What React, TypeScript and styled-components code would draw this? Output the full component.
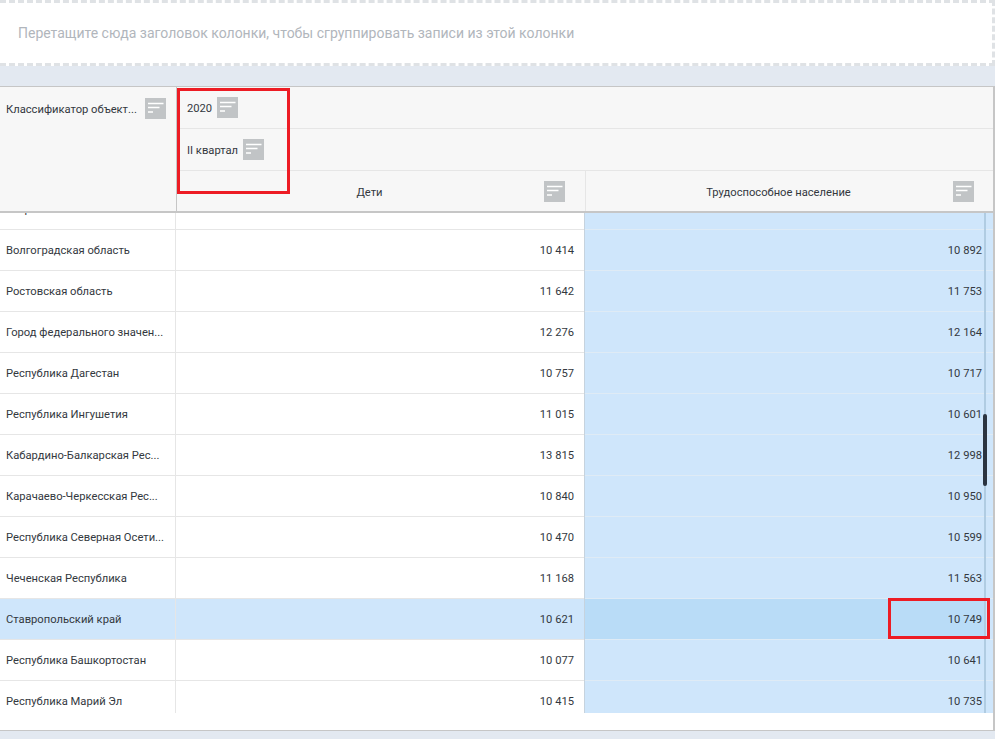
import React from "react";
import styled, { createGlobalStyle } from "styled-components";

const Global = createGlobalStyle`
  html, body { margin: 0; padding: 0; background: #e3e9f1; }
  body { font-family: Roboto, "Liberation Sans", sans-serif; overflow: hidden; }
  * { box-sizing: border-box; }
`;

const Page = styled.div`
  position: relative;
  width: 995px;
  height: 739px;
  display: flex;
  flex-direction: column;
  background: #e3e9f1;
`;

const DropZone = styled.div`
  height: 66px;
  flex: none;
  display: flex;
  align-items: center;
  padding-left: 18px;
  background: #fff;
  border: 3px dashed #dfe2e5;
  border-left: none;
  font-size: 14px;
  color: #b1b6bc;
`;

const Table = styled.div`
  margin-top: 20px;
  height: 645px;
  flex: none;
  background: #fff;
  border: 1px solid #c6c6c6;
  border-left: none;
  border-right-width: 2px;
  font-size: 11.2px;
  color: #33383e;
`;

const Head = styled.div`
  display: flex;
  height: 126px;
  background: #f7f7f7;
  border-bottom: 2px solid #c6c6c6;
`;

const HeadLabel = styled.span`
  padding-top: 2px;
`;

const FrozenHead = styled.div`
  width: 177px;
  flex: none;
  height: 42px;
  padding-left: 6px;
  display: flex;
  align-items: center;
  gap: 8px;
`;

const HeadColumns = styled.div`
  flex: 1;
  display: flex;
  flex-direction: column;
  border-left: 1px solid #c6c6c6;
  margin-left: -1px;
`;

const LevelRow = styled.div`
  height: 42px;
  padding-left: 10px;
  display: flex;
  align-items: center;
  gap: 5px;
  border-bottom: 1px solid #e6e6e6;
`;

const LeafRow = styled.div`
  flex: 1;
  display: grid;
  grid-template-columns: 408px 1fr;
`;

const LeafCell = styled.div`
  display: flex;
  align-items: center;
  padding: 0 20px 0 18px;
  & + & {
    padding-right: 19px;
    border-left: 1px solid #e6e6e6;
  }
`;

const LeafLabel = styled(HeadLabel)`
  flex: 1;
  text-align: center;
`;

const Body = styled.div`
  position: relative;
  height: 500px;
  overflow: hidden;
`;

const Rows = styled.div`
  margin-top: -24px;
`;

const Row = styled.div<{ $selected?: boolean }>`
  display: grid;
  grid-template-columns: 176px 409px 1fr;
  height: 41px;
  background: ${(p) => (p.$selected ? "#cfe6fb" : "#fff")};
  border-bottom: 1px solid #e6e6e6;
`;

const NameCell = styled.div`
  padding-left: 6px;
  padding-right: 10px;
  padding-top: 1px;
  line-height: 40px;
  border-right: 1px solid #e6e6e6;
  white-space: nowrap;
`;

const ValueCell = styled.div`
  padding-right: 10px;
  padding-top: 1px;
  line-height: 40px;
  text-align: right;
  border-right: 1px solid #c6d3de;
`;

const FocusCell = styled.div<{ $selected?: boolean }>`
  height: 41px;
  padding-right: 11px;
  padding-top: 1px;
  line-height: 40px;
  text-align: right;
  background: ${(p) =>
    p.$selected
      ? "linear-gradient(90deg, #b9dcf7 0, #b9dcf7 399px, #cfe6fb 399px)"
      : "#cfe6fb"};
  border-bottom: 1px solid #dfebf5;
`;

const Track = styled.div`
  position: absolute;
  left: 984px;
  top: 0;
  bottom: 0;
  width: 2px;
  background: #b0cce2;
`;

const Thumb = styled.div`
  position: absolute;
  left: 983px;
  top: 201px;
  width: 4px;
  height: 72px;
  border-radius: 2px;
  background: #2b3440;
`;

const Marker = styled.div<{ $x: number; $y: number; $w: number; $h: number }>`
  position: absolute;
  left: ${(p) => p.$x}px;
  top: ${(p) => p.$y}px;
  width: ${(p) => p.$w}px;
  height: ${(p) => p.$h}px;
  border: 3px solid #ed1c24;
  pointer-events: none;
`;

const IconBox = styled.svg`
  width: 21px;
  height: 21px;
  flex: none;
  display: block;
`;

const SortIcon = () => (
  <IconBox viewBox="0 0 21 21">
    <rect width="21" height="21" fill="#c1c4c6" />
    <path d="M3 5.5h15.5M3 9.5h11.5M3 14h5" stroke="#fff" strokeWidth="1.4" fill="none" />
  </IconBox>
);

const rows: [string, string, string][] = [
  ["Астраханская область", "10 512", "10 634"],
  ["Волгоградская область", "10 414", "10 892"],
  ["Ростовская область", "11 642", "11 753"],
  ["Город федерального значен...", "12 276", "12 164"],
  ["Республика Дагестан", "10 757", "10 717"],
  ["Республика Ингушетия", "11 015", "10 601"],
  ["Кабардино-Балкарская Рес...", "13 815", "12 998"],
  ["Карачаево-Черкесская Рес...", "10 840", "10 950"],
  ["Республика Северная Осети...", "10 470", "10 599"],
  ["Чеченская Республика", "11 168", "11 563"],
  ["Ставропольский край", "10 621", "10 749"],
  ["Республика Башкортостан", "10 077", "10 641"],
  ["Республика Марий Эл", "10 415", "10 735"],
];

export default function App() {
  return (
    <Page>
      <Global />
      <DropZone>Перетащите сюда заголовок колонки, чтобы сгруппировать записи из этой колонки</DropZone>
      <Table>
        <Head>
          <FrozenHead>
            <HeadLabel>Классификатор объект...</HeadLabel>
            <SortIcon />
          </FrozenHead>
          <HeadColumns>
            <LevelRow>
              <HeadLabel>2020</HeadLabel>
              <SortIcon />
            </LevelRow>
            <LevelRow>
              <HeadLabel>II квартал</HeadLabel>
              <SortIcon />
            </LevelRow>
            <LeafRow>
              <LeafCell>
                <LeafLabel>Дети</LeafLabel>
                <SortIcon />
              </LeafCell>
              <LeafCell>
                <LeafLabel>Трудоспособное население</LeafLabel>
                <SortIcon />
              </LeafCell>
            </LeafRow>
          </HeadColumns>
        </Head>
        <Body>
          <Rows>
            {rows.map(([name, a, b]) => {
              const selected = name === "Ставропольский край";
              return (
                <Row key={name} $selected={selected}>
                  <NameCell>{name}</NameCell>
                  <ValueCell>{a}</ValueCell>
                  <FocusCell $selected={selected}>{b}</FocusCell>
                </Row>
              );
            })}
          </Rows>
          <Track />
          <Thumb />
        </Body>
      </Table>
      <Marker $x={177} $y={88} $w={113} $h={106} />
      <Marker $x={888} $y={598} $w={102} $h={41} />
    </Page>
  );
}
